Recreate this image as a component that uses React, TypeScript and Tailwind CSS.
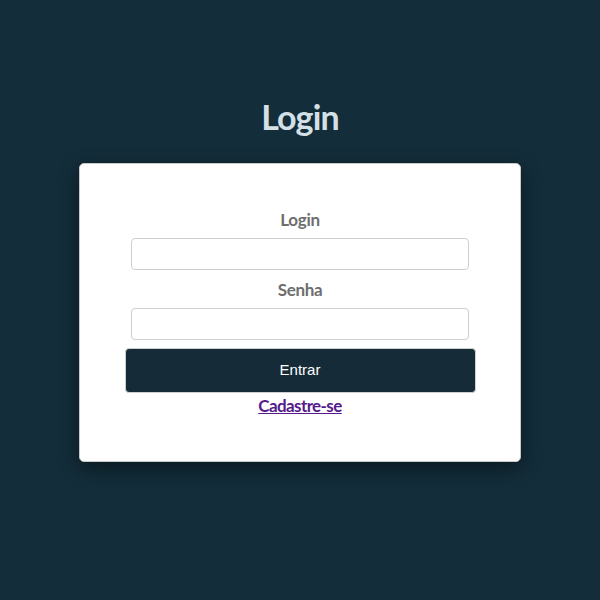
export default function App() {
  return (
    <div className="flex min-h-[600px] w-full flex-col items-center bg-[#132d3a] pt-[97px] font-['Lato',sans-serif]">
      <h1 className="h-[40px] text-[34px] font-bold leading-[40px] tracking-tight text-[#d4e0e6]">Login</h1>
      <div className="mt-[26px] flex w-[442px] flex-col items-center rounded-[5px] border border-[#c9c9c9] bg-white pb-[43px] pt-[44px] shadow-[0_6px_20px_rgba(0,0,0,0.45)]">
        <label className="h-[24px] text-[17px] font-bold leading-[24px] tracking-[-0.3px] text-[#6e6e6e]">Login</label>
        <input className="mt-[6px] h-[32px] w-[338px] rounded-[4px] border border-[#cfcfcf] bg-white px-2 outline-none" />
        <label className="mt-[8px] h-[24px] text-[17px] font-bold leading-[24px] tracking-[-0.3px] text-[#6e6e6e]">Senha</label>
        <input type="password" className="mt-[6px] h-[32px] w-[338px] rounded-[4px] border border-[#cfcfcf] bg-white px-2 outline-none" />
        <button className="mt-[8px] h-[45px] w-[351px] rounded-[4px] border border-[#cfcfcf] bg-[#152c38] font-['Liberation_Sans',sans-serif] text-[15px] text-white">
          Entrar
        </button>
        <a href="#" className="mt-px h-[24px] text-[17px] font-bold leading-[24px] tracking-[-0.6px] text-[#551a8b] underline">Cadastre-se</a>
      </div>
    </div>
  );
}
